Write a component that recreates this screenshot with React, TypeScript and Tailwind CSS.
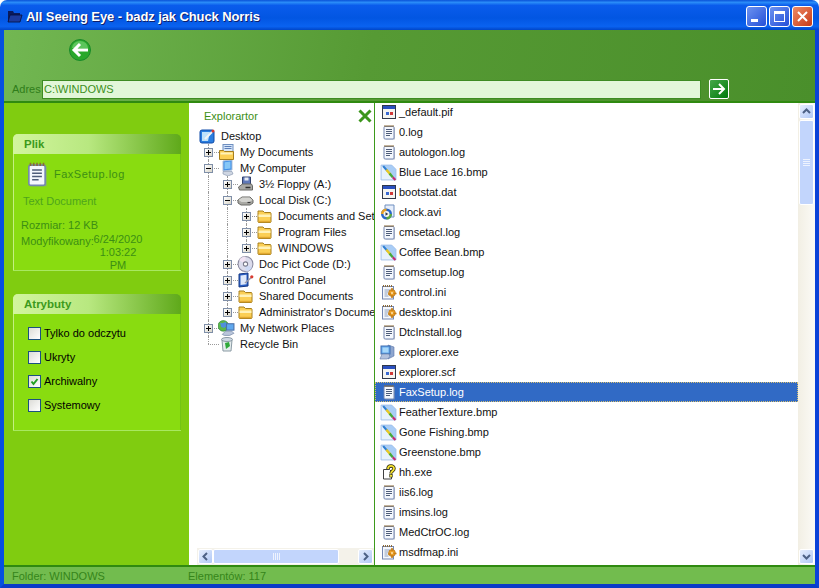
import React from "react";

type IconName = "log" | "bmp" | "win" | "avi" | "ini" | "exe" | "help";

function Notepad({ className = "w-4 h-4" }: { className?: string }) {
  return (
    <svg viewBox="0 0 16 16" className={className}>
      <path d="M4 3.500h10v12H5z" fill="#8a94a8" opacity=".5" />
      <rect x="3" y="2.500" width="10" height="12.500" rx="1" fill="#f4f7fd" stroke="#7486b0" />
      <path d="M3.500 2h9" stroke="#8a6a38" strokeWidth="2" strokeDasharray="1 1" />
      <path d="M5 5.500h6M5 7.500h6M5 9.500h6M5 11.500h4" stroke="#4f5d7a" />
    </svg>
  );
}

function FileIcon({ name }: { name: IconName }) {
  if (name === "log") return <Notepad />;
  if (name === "bmp")
    return (
      <svg viewBox="0 0 16 16" className="w-[17px] h-[17px] -ml-0.5">
        <path d="M1 1h10l4 4v10H1z" fill="#a9cdf6" />
        <path d="M1 1l12 14H1z" fill="#e8f2fd" />
        <path d="M1 1h10l4 4v10H1z" fill="none" stroke="#9dbde8" strokeWidth=".8" />
        <path d="M3 2l4 4.500" stroke="#2f7fd0" strokeWidth="2" />
        <path d="M6 5.500l4 4.500" stroke="#e8c820" strokeWidth="2.200" />
        <path d="M9 9l3 3.500" stroke="#46a83a" strokeWidth="2.200" />
        <path d="M12 12.500l2.500 2.500" stroke="#c82a70" strokeWidth="2" />
      </svg>
    );
  if (name === "win")
    return (
      <svg viewBox="0 0 16 16" className="w-4 h-4">
        <rect x="1.500" y="1.500" width="13" height="13" fill="#f4f4f0" stroke="#30384a" />
        <rect x="2" y="2" width="12" height="3" fill="#2a50c0" />
        <rect x="5" y="8" width="3" height="3" fill="#3868d0" />
        <rect x="9" y="8" width="3" height="3" fill="#d03838" />
      </svg>
    );
  if (name === "avi")
    return (
      <svg viewBox="0 0 16 16" className="w-4 h-4 -ml-0.5">
        <path d="M5 1h9v12H5z" fill="#e6eefb" stroke="#6f8fc0" />
        <circle cx="6.500" cy="10" r="5.500" fill="#2a66c8" />
        <path d="M1 10a5.500 5.500 0 0 1 5.500-5.500V10z" fill="#e8a020" />
        <path d="M12 10a5.500 5.500 0 0 1-5.500 5.500V10z" fill="#5aa83a" />
        <circle cx="6.500" cy="10" r="3" fill="#f4f4f4" />
        <path d="M5.500 8.300l2.800 1.700-2.800 1.700z" fill="#303848" />
      </svg>
    );
  if (name === "ini")
    return (
      <svg viewBox="0 0 16 16" className="w-4 h-4">
        <rect x="1.500" y="2.500" width="11" height="12.500" fill="#f4f7fd" stroke="#7486b0" />
        <path d="M2 2h10" stroke="#8a6a38" strokeWidth="2" strokeDasharray="1 1" />
        <path d="M3.500 6h6M3.500 8h4M3.500 10h3M3.500 12h4" stroke="#8fa0bd" />
        <circle cx="11" cy="9" r="3.400" fill="#eda028" stroke="#a86810" strokeWidth=".6" />
        <path d="M11 4v3M15.500 9.500h-3M11 14v-3M7 10h3" stroke="#c97f14" strokeWidth="1.600" />
        <circle cx="11" cy="9" r="1" fill="#fbe3ae" />
      </svg>
    );
  if (name === "exe")
    return (
      <svg viewBox="0 0 16 16" className="w-[18px] h-4 -ml-1">
        <path d="M9 1l6 2v9l-6 3z" fill="#8ea6cf" stroke="#5a74a8" strokeWidth=".6" />
        <rect x="2" y="2" width="9" height="8" fill="#62a8ec" stroke="#3f6db0" />
        <rect x="3.500" y="3.500" width="6" height="5" fill="#a7d8fa" />
        <path d="M1 15l2-5h7l1 3-3 2z" fill="#b4c2dd" stroke="#6278a4" strokeWidth=".6" />
      </svg>
    );
  return (
    <svg viewBox="0 0 16 16" className="w-4 h-4">
      <path d="M2.500 5.500h6l2 2v7.500h-8z" fill="#ffffff" stroke="#404040" />
      <path d="M7 5c0-4 6-4 6-.5 0 2.500-3 2.500-3 5" fill="none" stroke="#2b2b10" strokeWidth="3.400" />
      <path d="M7 5c0-4 6-4 6-.5 0 2.500-3 2.500-3 5" fill="none" stroke="#f4e030" strokeWidth="1.800" />
      <rect x="8.700" y="10.500" width="2.600" height="2.600" fill="#f4e030" stroke="#2b2b10" strokeWidth=".6" />
    </svg>
  );
}

function Folder() {
  return (
    <svg viewBox="0 0 16 16" className="w-[18px] h-4 -ml-px">
      <path d="M1.500 4.500V3h5l1.500 1.500h6l.5 1v8.500l-.5.500h-12l-.5-.500z" fill="#fbcf55" stroke="#a67f1e" />
      <path d="M2 6.500h12v2.500H2z" fill="#fff2b8" />
      <path d="M2 13.500h12" stroke="#e2a830" strokeWidth="1.500" />
    </svg>
  );
}

function TreeIcon({ name }: { name: string }) {
  if (name === "folder") return <Folder />;
  if (name === "mydocs")
    return (
      <svg viewBox="0 0 16 16" className="w-[18px] h-4 -ml-px">
        <rect x="4.500" y="0.500" width="10" height="9" fill="#d6e6fa" stroke="#6f8fc0" />
        <path d="M6 2.500h7M6 4.500h7" stroke="#5d7fb8" />
        <path d="M1 6.500h4l1 1h9v8H1z" fill="#fbcf55" stroke="#a67f1e" />
        <path d="M2 9.500h12" stroke="#fff2b8" strokeWidth="2" />
      </svg>
    );
  if (name === "computer")
    return (
      <svg viewBox="0 0 16 16" className="w-4 h-4">
        <path d="M4 1l9-1v10l-9 1z" fill="#3f8fe8" stroke="#aebfd8" />
        <path d="M5.500 2.200l6-.7v7l-6 .7z" fill="#86c7f7" />
        <path d="M4 11.500h9l1 2.500-5 2-5-2z" fill="#cfd6e2" stroke="#8192ad" strokeWidth=".6" />
      </svg>
    );
  if (name === "floppy")
    return (
      <svg viewBox="0 0 16 16" className="w-[18px] h-4 -ml-px">
        <path d="M5 1h8v8H5z" fill="#5f78b8" stroke="#33436e" />
        <rect x="7" y="1.500" width="4" height="3" fill="#e8ecf4" />
        <path d="M1 11l4-3h9l1 2v4H2z" fill="#a9a9a5" stroke="#6a6a66" />
        <path d="M8 11.500h5" stroke="#303030" strokeWidth="1.500" />
      </svg>
    );
  if (name === "disk")
    return (
      <svg viewBox="0 0 16 16" className="w-[18px] h-4 -ml-px">
        <path d="M0.500 8l4-3h8l3 3v3l-3 2h-9l-3-2z" fill="#a9a9a4" stroke="#6a6a66" />
        <path d="M1 8l3.500-2.500h7.500l3 2.500-3 2h-8z" fill="#d4d4d0" />
        <path d="M10 10.500h3" stroke="#3a3a3a" strokeWidth="1.200" />
      </svg>
    );
  if (name === "cd")
    return (
      <svg viewBox="0 0 16 16" className="w-[18px] h-[18px] -ml-px">
        <circle cx="8" cy="8" r="7" fill="#dcdcec" stroke="#8a8aa0" />
        <path d="M8 8L2 4.500A7 7 0 0 1 8 1z" fill="#f2e4f4" />
        <path d="M8 8l6 3.500A7 7 0 0 1 8 15z" fill="#cdd9f4" />
        <circle cx="8" cy="8" r="2" fill="#ffffff" stroke="#7a7a8c" />
      </svg>
    );
  if (name === "panel")
    return (
      <svg viewBox="0 0 16 16" className="w-[18px] h-[18px]">
        <path d="M1 2l9-1v13l-9 1z" fill="#2a5fc4" stroke="#173a85" />
        <path d="M2.500 3.500l6-.7v9.500l-6 .7z" fill="#dfe9fa" />
        <path d="M7 11l7-6" stroke="#9a9aa8" strokeWidth="1.500" />
        <circle cx="13.800" cy="4.800" r="1.600" fill="#d83a30" />
      </svg>
    );
  if (name === "network")
    return (
      <svg viewBox="0 0 16 16" className="w-[18px] h-[18px] -ml-px">
        <circle cx="5" cy="6" r="5" fill="#5bb84a" stroke="#2b7f38" strokeWidth=".6" />
        <path d="M2 3c2 1 4 0 5-1l2 3-3 3-3-1z" fill="#4f90dc" />
        <rect x="8" y="4" width="7" height="6" fill="#5fa8ee" stroke="#4a70a8" />
        <path d="M4 14l3-3h6l2 2-4 2H6z" fill="#b9c5da" stroke="#6c7fa0" strokeWidth=".6" />
      </svg>
    );
  if (name === "recycle")
    return (
      <svg viewBox="0 0 16 16" className="w-4 h-4">
        <path d="M3 4l1 11h8l1-11z" fill="#e4ecec" stroke="#8a9aa4" />
        <ellipse cx="8" cy="3.500" rx="5.500" ry="2" fill="#cfd8e4" stroke="#8a9aa4" />
        <path d="M6 7l4-1 1 4-4 3z" fill="#2fa83a" />
      </svg>
    );
  return (
    <svg viewBox="0 0 17 17" className="w-[17px] h-[17px]">
      <rect x="1" y="2" width="14" height="13" rx="2" fill="#2a7ee0" stroke="#0f4aa8" />
      <path d="M3 4h8l-2 9H3z" fill="#bfe2fb" />
      <path d="M6 11l7-7" stroke="#f4f4f4" strokeWidth="2" />
      <circle cx="14" cy="3" r="1.500" fill="#d83a30" />
    </svg>
  );
}

const files: [string, IconName][] = [
  ["_default.pif", "win"],
  ["0.log", "log"],
  ["autologon.log", "log"],
  ["Blue Lace 16.bmp", "bmp"],
  ["bootstat.dat", "win"],
  ["clock.avi", "avi"],
  ["cmsetacl.log", "log"],
  ["Coffee Bean.bmp", "bmp"],
  ["comsetup.log", "log"],
  ["control.ini", "ini"],
  ["desktop.ini", "ini"],
  ["DtcInstall.log", "log"],
  ["explorer.exe", "exe"],
  ["explorer.scf", "win"],
  ["FaxSetup.log", "log"],
  ["FeatherTexture.bmp", "bmp"],
  ["Gone Fishing.bmp", "bmp"],
  ["Greenstone.bmp", "bmp"],
  ["hh.exe", "help"],
  ["iis6.log", "log"],
  ["imsins.log", "log"],
  ["MedCtrOC.log", "log"],
  ["msdfmap.ini", "ini"],
];

type Node = { level: number; text: string; icon: string; sign?: "+" | "-"; last?: boolean };

const tree: Node[] = [
  { level: 0, text: "My Documents", icon: "mydocs", sign: "+" },
  { level: 0, text: "My Computer", icon: "computer", sign: "-" },
  { level: 1, text: "3½ Floppy (A:)", icon: "floppy", sign: "+" },
  { level: 1, text: "Local Disk (C:)", icon: "disk", sign: "-" },
  { level: 2, text: "Documents and Settings", icon: "folder", sign: "+" },
  { level: 2, text: "Program Files", icon: "folder", sign: "+" },
  { level: 2, text: "WINDOWS", icon: "folder", sign: "+", last: true },
  { level: 1, text: "Doc Pict Code (D:)", icon: "cd", sign: "+" },
  { level: 1, text: "Control Panel", icon: "panel", sign: "+" },
  { level: 1, text: "Shared Documents", icon: "folder", sign: "+" },
  { level: 1, text: "Administrator's Documents", icon: "folder", sign: "+", last: true },
  { level: 0, text: "My Network Places", icon: "network", sign: "+" },
  { level: 0, text: "Recycle Bin", icon: "recycle", last: true },
];

function TreeRow({ node }: { node: Node }) {
  return (
    <div className="flex h-4 items-center whitespace-nowrap">
      {Array.from({ length: node.level }).map((_, i) => (
        <div key={i} className="h-4 w-[19px] shrink-0 pl-1">
          <div className="h-4 w-0 border-l border-dotted border-[#9a9a9a]" />
        </div>
      ))}
      <div className="relative flex h-4 w-[15px] shrink-0 items-center">
        <div
          className={
            node.last
              ? "absolute left-1 top-0 h-2 w-0 border-l border-dotted border-[#9a9a9a]"
              : "absolute left-1 top-0 h-4 w-0 border-l border-dotted border-[#9a9a9a]"
          }
        />
        <div className="absolute left-1 top-2 h-0 w-[11px] border-t border-dotted border-[#9a9a9a]" />
        {node.sign && (
          <div className="relative z-10 flex h-[9px] w-[9px] items-center justify-center border border-[#7f8fa8] bg-[linear-gradient(135deg,#ffffff,#d8d5c8)]">
            <div className="h-px w-[5px] bg-black" />
            {node.sign === "+" && <div className="absolute h-[5px] w-px bg-black" />}
          </div>
        )}
      </div>
      <div className="relative z-10 flex h-4 w-4 shrink-0 items-center">
        <TreeIcon name={node.icon} />
      </div>
      <span className="ml-[5px]">{node.text}</span>
    </div>
  );
}

function Arrow({ d }: { d: string }) {
  return (
    <svg viewBox="0 0 9 9" className="h-[9px] w-[9px]">
      <path d={d} fill="none" stroke="#4d6185" strokeWidth="2" />
    </svg>
  );
}

const sbBtn =
  "flex h-[15px] w-[15px] shrink-0 items-center justify-center rounded-[2px] border border-white bg-[linear-gradient(135deg,#e6eefd,#b0c8f6)]";

function Grip({ vertical }: { vertical: boolean }) {
  return (
    <div className={vertical ? "flex flex-col gap-px" : "flex gap-px"}>
      {[0, 1, 2, 3].map((i) => (
        <div key={i} className={vertical ? "h-px w-[7px] bg-[#eef3fe]" : "h-[7px] w-px bg-[#eef3fe]"} />
      ))}
    </div>
  );
}

function Check({ label, checked }: { label: string; checked?: boolean }) {
  return (
    <div className="flex h-6 items-center">
      <div className="flex h-[13px] w-[13px] items-center justify-center border border-[#1c5180] bg-[linear-gradient(135deg,#dcdcd7,#ffffff)]">
        {checked && (
          <svg viewBox="0 0 11 11" className="h-[11px] w-[11px]">
            <path d="M2.500 5.500l2 2.500 4-5" fill="none" stroke="#21a121" strokeWidth="2" />
          </svg>
        )}
      </div>
      <span className="ml-[3px] text-black">{label}</span>
    </div>
  );
}

function Card({ title, children }: { title: string; children: React.ReactNode }) {
  return (
    <div className="flex h-[137px] w-[168px] flex-col overflow-hidden rounded-t-[5px] border-b border-b-[#a8e860] bg-[#89dc10] shadow-[inset_1px_0_0_#c4f080,inset_-1px_0_0_#74c414]">
      <div className="flex h-5 shrink-0 items-center bg-[linear-gradient(90deg,#d2f59e,#b8e880_45%,#5fa91a)] pl-[11px] text-[11.5px] font-bold text-[#3c9a1c]">
        {title}
      </div>
      {children}
    </div>
  );
}

export default function App() {
  return (
    <div
      className="flex h-[588px] w-[819px] flex-col overflow-hidden bg-white text-[11px] leading-4"
      style={{ fontFamily: '"Liberation Sans", Arial, sans-serif' }}
    >
      <div className="flex h-[30px] shrink-0 items-center rounded-t-[7px] bg-[linear-gradient(180deg,#0a52d8_0%,#2a8cf8_8%,#0a5cec_18%,#0256e2_60%,#0a62f0_88%,#0046c8_100%)] pl-[7px] pr-[6px]">
        <svg viewBox="0 0 16 16" className="mt-[2px] h-4 w-4">
          <path d="M1 3h5l1 2h6v9H1z" fill="#0a1a5c" />
          <path d="M3 7h12l-2 7H1z" fill="#1c3a9c" stroke="#06103c" strokeWidth=".8" />
        </svg>
        <span className="ml-[3px] mt-[3px] text-[13px] font-bold tracking-[-0.1px] text-white [text-shadow:1px_1px_#0f1f6c]">
          All Seeing Eye - badz jak Chuck Norris
        </span>
        <div className="ml-auto mt-[3px] flex gap-[2px]">
          <div className="flex h-[21px] w-[21px] items-end rounded-[3px] border border-white bg-[linear-gradient(135deg,#6c92f0,#2450d8)] pb-[4px] pl-1">
            <div className="h-[3px] w-[7px] bg-white" />
          </div>
          <div className="flex h-[21px] w-[21px] items-center justify-center rounded-[3px] border border-white bg-[linear-gradient(135deg,#6c92f0,#2450d8)]">
            <div className="h-[11px] w-[11px] border border-t-[3px] border-white" />
          </div>
          <div className="flex h-[21px] w-[21px] items-center justify-center rounded-[3px] border border-white bg-[linear-gradient(135deg,#ee8a64,#c83a18)]">
            <svg viewBox="0 0 11 11" className="h-[11px] w-[11px]">
              <path d="M1 1l9 9M10 1l-9 9" stroke="#fff" strokeWidth="2" />
            </svg>
          </div>
        </div>
      </div>

      <div className="flex min-h-0 flex-1 flex-col border-x-4 border-b-4 border-l-[#0550e0] border-r-[#0a42d8] border-b-[#0a3bc8]">
        <div className="flex h-[73px] shrink-0 flex-col border-b-2 border-b-[#2f8a10] bg-[linear-gradient(100deg,#72b752,#569a34_45%,#4a8f2b)]">
          <div className="h-[31px] pl-[65px] pt-[9px]">
            <svg viewBox="0 0 22 22" className="h-[22px] w-[22px]">
              <circle cx="11" cy="11" r="10.500" fill="#2aa82a" stroke="#1a8a2a" />
              <path d="M3 9a8 7 0 0 1 16 0z" fill="#7fd87f" opacity=".6" />
              <path d="M19 11H6M11 5l-6 6 6 6" fill="none" stroke="#ffffff" strokeWidth="3" />
            </svg>
          </div>
          <div className="mt-[18px] flex items-center">
            <span className="ml-2 w-[30px] text-[#2f7d1a]">Adres</span>
            <div className="flex h-[19px] w-[659px] items-center border border-[#3d8c22] bg-[#e2f7d9] pl-[1px] text-[#3c8f20]">
              C:\WINDOWS
            </div>
            <div className="ml-2 flex h-5 w-5 items-center justify-center rounded-[2px] border border-white bg-[linear-gradient(135deg,#45a84a,#007a0a)]">
              <svg viewBox="0 0 14 14" className="h-[14px] w-[14px]">
                <path d="M1 7h11M7 2l5 5-5 5" fill="none" stroke="#fff" strokeWidth="2" />
              </svg>
            </div>
          </div>
        </div>

        <div className="flex min-h-0 flex-1">
          <div className="flex w-[185px] shrink-0 flex-col gap-[23px] bg-[#80cc10] pl-[9px] pt-[31px]">
            <Card title="Plik">
              <div className="flex-1 text-[#3c8f14]">
                <div className="flex h-[40px] items-center pl-[11px]">
                  <Notepad className="h-[30px] w-[26px]" />
                  <span className="ml-[4px] tracking-[0.5px]">FaxSetup.log</span>
                </div>
                <div className="ml-[10px] -mt-px text-[#4ea51c]">Text Document</div>
                <div className="ml-2 mt-2">Rozmiar: 12 KB</div>
                <div className="ml-2 flex">
                  <span className="w-[72px] shrink-0">Modyfikowany:</span>
                  <span className="w-[50px] text-center leading-[13px]">6/24/2020 1:03:22 PM</span>
                </div>
              </div>
            </Card>
            <Card title="Atrybuty">
              <div className="pl-[15px] pt-[7px]">
                <Check label="Tylko do odczytu" />
                <Check label="Ukryty" />
                <Check label="Archiwalny" checked />
                <Check label="Systemowy" />
              </div>
            </Card>
          </div>

          <div className="flex w-[186px] shrink-0 flex-col border-r border-r-[#3d9a1c] bg-white">
            <div className="flex h-[25px] shrink-0 items-center justify-between pl-[15px] pr-[2px] text-[#3c8f14]">
              <span>Explorartor</span>
              <svg viewBox="0 0 14 14" className="h-[14px] w-[14px]">
                <path d="M1.500 1.500l11 11M12.500 1.500l-11 11" stroke="#3c961c" strokeWidth="3" />
              </svg>
            </div>
            <div className="min-h-0 flex-1 overflow-hidden pl-[15px] text-[#111]">
              <div className="-ml-[5px] flex h-4 items-center">
                <TreeIcon name="desktop" />
                <span className="ml-[5px]">Desktop</span>
              </div>
              {tree.map((n) => (
                <TreeRow key={n.text} node={n} />
              ))}
            </div>
            <div className="ml-2 flex h-[17px] shrink-0 items-center bg-[#f4f2ea] pl-px">
              <div className={sbBtn}>
                <Arrow d="M6 1L2.500 4.500 6 8" />
              </div>
              <div className="flex h-[15px] w-[126px] items-center justify-center rounded-[2px] border border-white bg-[#c2d5fc]">
                <Grip vertical={false} />
              </div>
              <div className={sbBtn + " ml-auto mr-px"}>
                <Arrow d="M3 1l3.500 3.500L3 8" />
              </div>
            </div>
          </div>

          <div className="flex min-w-0 flex-1 bg-white">
            <div className="-mt-px min-w-0 flex-1 overflow-hidden text-[#111]">
              {files.map(([name, icon]) =>
                name === "FaxSetup.log" ? (
                  <div
                    key={name}
                    className="flex h-5 items-center border border-dotted border-[#d8c070] bg-[#316ac5] pl-[5px] text-white"
                  >
                    <div className="flex w-4 justify-center">
                      <FileIcon name={icon} />
                    </div>
                    <span className="ml-[2px]">{name}</span>
                  </div>
                ) : (
                  <div key={name} className="flex h-5 items-center pl-[6px]">
                    <div className="flex w-4 justify-center">
                      <FileIcon name={icon} />
                    </div>
                    <span className="ml-[2px]">{name}</span>
                  </div>
                )
              )}
            </div>
            <div className="flex w-[17px] shrink-0 flex-col items-center bg-[linear-gradient(90deg,#f2efe4,#fbfaf6)] pt-px">
              <div className={sbBtn}>
                <Arrow d="M1 6l3.500-3.500L8 6" />
              </div>
              <div className="mt-px flex h-[85px] w-[15px] items-center justify-center rounded-[2px] border border-white bg-[#c2d5fc]">
                <Grip vertical />
              </div>
              <div className={sbBtn + " mt-auto mb-px"}>
                <Arrow d="M1 3l3.500 3.500L8 3" />
              </div>
            </div>
          </div>
        </div>

        <div className="flex h-[19px] shrink-0 items-center border-t-2 border-t-[#2f8a10] bg-[#72bc4e] text-[#35851a]">
          <span className="ml-2 w-[176px]">Folder: WINDOWS</span>
          <span>Elementów: 117</span>
        </div>
      </div>
    </div>
  );
}
